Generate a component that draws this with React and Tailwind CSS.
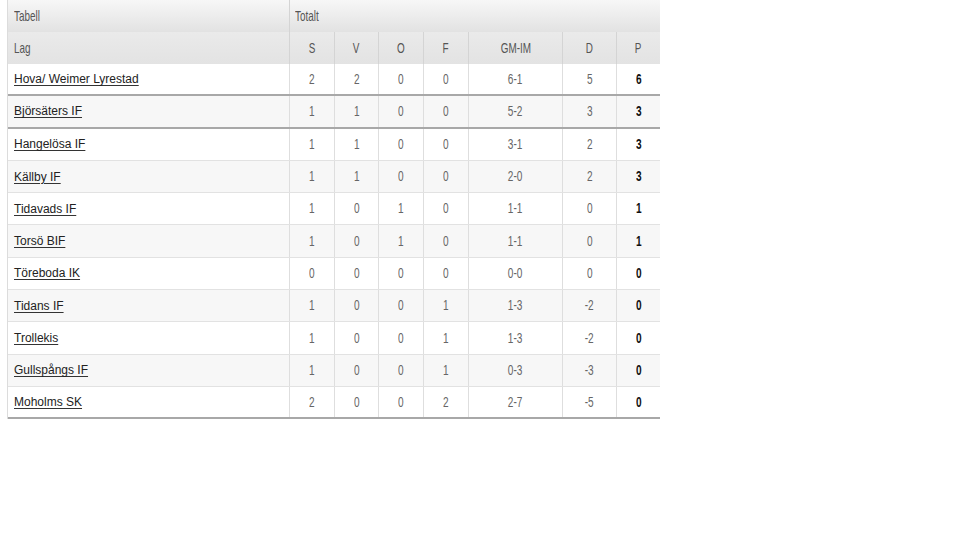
import React from 'react';

const rows = [
  ['Hova/ Weimer Lyrestad', 2, 2, 0, 0, '6-1', 5, 6],
  ['Björsäters IF', 1, 1, 0, 0, '5-2', 3, 3],
  ['Hangelösa IF', 1, 1, 0, 0, '3-1', 2, 3],
  ['Källby IF', 1, 1, 0, 0, '2-0', 2, 3],
  ['Tidavads IF', 1, 0, 1, 0, '1-1', 0, 1],
  ['Torsö BIF', 1, 0, 1, 0, '1-1', 0, 1],
  ['Töreboda IK', 0, 0, 0, 0, '0-0', 0, 0],
  ['Tidans IF', 1, 0, 0, 1, '1-3', -2, 0],
  ['Trollekis', 1, 0, 0, 1, '1-3', -2, 0],
  ['Gullspångs IF', 1, 0, 0, 1, '0-3', -3, 0],
  ['Moholms SK', 2, 0, 0, 2, '2-7', -5, 0],
];

const cols = 'grid grid-cols-[282px_45px_44px_45px_45px_94px_54px_43px]';

const Cond = ({ children, className = '' }) => (
  <span className={`inline-block ${className}`}>{children}</span>
);

export default function App() {
  return (
    <div className="w-[960px] h-[540px] bg-white" style={{ fontFamily: '"Liberation Sans", Arial, sans-serif' }}>
      <div className="ml-[7px] w-[653px] border-l border-[#dcdcdc]">
        <div className="grid grid-cols-[282px_371px] h-[32px] bg-gradient-to-b from-[#f7f7f7] to-[#e2e2e2] text-[15px] text-[#555]">
          <div className="flex items-center pl-[6px] border-r border-[#d4d4d4]">
            <Cond className="origin-left scale-x-[0.66]">Tabell</Cond>
          </div>
          <div className="flex items-center pl-[5px]">
            <Cond className="origin-left scale-x-[0.66]">Totalt</Cond>
          </div>
        </div>
        <div className={`${cols} h-[32px] bg-gradient-to-b from-[#eaeaea] to-[#e3e3e3] text-[15px] text-[#555]`}>
          <div className="flex items-center pl-[6px] border-r border-[#d4d4d4]">
            <Cond className="origin-left scale-x-[0.66]">Lag</Cond>
          </div>
          {['S', 'V', 'O', 'F', 'GM-IM', 'D', 'P'].map((h, i) => (
            <div key={h} className={`flex items-center justify-center ${i < 6 ? 'border-r border-[#d4d4d4]' : ''}`}>
              <Cond className="scale-x-[0.66]">{h}</Cond>
            </div>
          ))}
        </div>
        {rows.map((r, idx) => {
          const dark = idx === 0 || idx === 1 || idx === rows.length - 1;
          return (
            <div
              key={r[0]}
              className={`${cols} h-[32.3px] ${dark ? 'border-b-[2px] border-[#a8a8a8]' : 'border-b border-[#e2e2e2]'} ${idx % 2 ? 'bg-[#f7f7f7]' : 'bg-white'}`}
            >
              <div className="flex items-center pl-[6px] border-r border-[#dedede]">
                <a className="text-[12px] text-[#222] underline underline-offset-[2px] decoration-[#333]">{r[0]}</a>
              </div>
              {r.slice(1).map((v, i) => (
                <div
                  key={i}
                  className={`flex items-center justify-center text-[14px] ${i < 6 ? 'border-r border-[#dedede] text-[#666]' : 'text-[#111] font-bold'}`}
                >
                  <Cond className="scale-x-[0.72]">{v}</Cond>
                </div>
              ))}
            </div>
          );
        })}
      </div>
    </div>
  );
}
